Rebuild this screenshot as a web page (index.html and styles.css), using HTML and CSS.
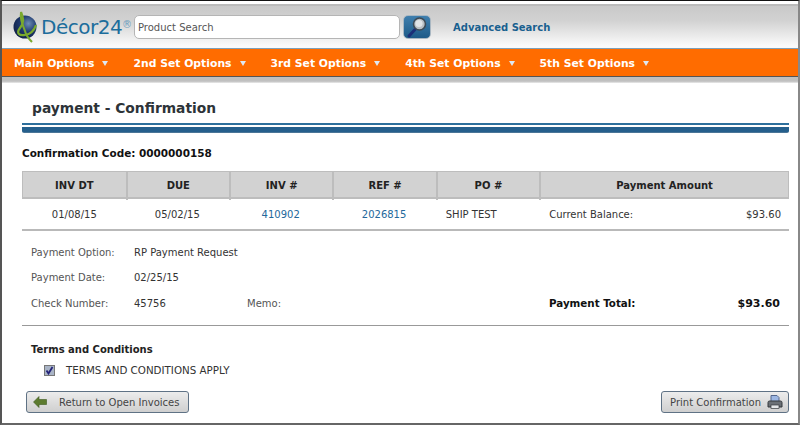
FILE: index.html
```html
<!DOCTYPE html>
<html lang="en">
<head>
<meta charset="utf-8">
<title>payment - Confirmation</title>
<link rel="stylesheet" href="styles.css">
</head>
<body>
<div class="frame">
  <header class="top">
    <svg class="logo" width="24" height="32" viewBox="0 0 24 32">
      <defs>
        <radialGradient id="globe" cx="0.65" cy="0.35" r="0.8">
          <stop offset="0" stop-color="#6d8db5"/>
          <stop offset="0.45" stop-color="#1f3a70"/>
          <stop offset="1" stop-color="#0b1a3d"/>
        </radialGradient>
      </defs>
      <circle cx="12" cy="16" r="11.5" fill="url(#globe)"/>
      <path d="M8 1 C11 8 11 12 7 17 C3 22 6 25 12 24 C18 23 21 20 23 14" fill="none" stroke="#7aa92e" stroke-width="2.2"/>
      <path d="M8 1 C7 8 9 12 12 20 C13 25 16 28 19 31" fill="none" stroke="#7aa92e" stroke-width="2"/>
    </svg>
    <div class="brand">Décor24<sup class="reg">®</sup></div>
    <div class="search">Product Search</div>
    <button class="go" type="button" aria-label="Search">
      <svg width="24" height="24" viewBox="0 0 24 24">
        <path d="M4 21 L10 14.5" stroke="#1c2f78" stroke-width="3" stroke-linecap="round"/>
        <circle cx="14.5" cy="9" r="6" fill="#b9bfc4" stroke="#3d4a55" stroke-width="1.6"/>
        <circle cx="14" cy="8.5" r="3.6" fill="#dfe3e6"/>
      </svg>
    </button>
    <a class="adv" href="#">Advanced Search</a>
  </header>
  <nav class="nav">
    <span class="nav-item">Main Options<i class="caret"></i></span>
    <span class="nav-item">2nd Set Options<i class="caret"></i></span>
    <span class="nav-item">3rd Set Options<i class="caret"></i></span>
    <span class="nav-item">4th Set Options<i class="caret"></i></span>
    <span class="nav-item">5th Set Options<i class="caret"></i></span>
  </nav>
  <div class="band"></div>
  <main class="content">
    <h1 class="title">payment - Confirmation</h1>
    <div class="rule"></div>
    <div class="code">Confirmation Code: 0000000158</div>
    <div class="grid head">
      <div>INV DT</div><div>DUE</div><div>INV #</div><div>REF #</div><div>PO #</div><div>Payment Amount</div>
    </div>
    <div class="grid row">
      <div>01/08/15</div><div>05/02/15</div><div><a href="#">410902</a></div><div><a href="#">2026815</a></div><div class="po">SHIP TEST</div>
      <div class="bal"><span>Current Balance:</span><span>$93.60</span></div>
    </div>
    <section class="details">
      <div class="line"><span class="lbl">Payment Option:</span><span class="val">RP Payment Request</span></div>
      <div class="line"><span class="lbl">Payment Date:</span><span class="val">02/25/15</span></div>
      <div class="line"><span class="lbl">Check Number:</span><span class="val check">45756</span><span class="lbl memo">Memo:</span>
        <span class="total"><b>Payment Total:</b><b class="sum">$93.60</b></span></div>
    </section>
    <section class="terms">
      <div class="terms-h">Terms and Conditions</div>
      <div class="terms-c"><span class="box"><svg width="9" height="9" viewBox="0 0 9 9"><path d="M1.5 4.5 L3.5 7.5 L7.5 1" fill="none" stroke="#24247a" stroke-width="1.8"/></svg></span>TERMS AND CONDITIONS APPLY</div>
    </section>
    <div class="actions">
      <button class="btn" type="button">
        <svg width="14" height="12" viewBox="0 0 14 12"><path d="M0.5 6 L6 0.5 V3.5 H13.5 V8.5 H6 V11.5 Z" fill="#5d7b2f" stroke="#3d5a1e" stroke-width="0.6"/></svg>
        <span class="back-t">Return to Open Invoices</span>
      </button>
      <button class="btn print" type="button">
        <span>Print Confirmation</span>
        <svg width="16" height="14" viewBox="0 0 16 14">
          <path d="M4 7 V0.5 H10 L12 2.5 V7 Z" fill="#9db7e3" stroke="#56688c"/>
          <path d="M1 12 V7.5 Q1 6 2.5 6 H13.5 Q15 6 15 7.5 V12 Z" fill="#6b7076" stroke="#34383d"/>
          <rect x="4" y="10" width="8" height="3.5" fill="#e4e6e8" stroke="#34383d" stroke-width="0.7"/>
        </svg>
      </button>
    </div>
  </main>
</div>
</body>
</html>
```
FILE: styles.css
```css
* { box-sizing: border-box; }
html, body { margin: 0; padding: 0; background: #fff; }
body { width: 800px; height: 425px; overflow: hidden; font-family: "DejaVu Sans", Verdana, sans-serif; font-size: 10px; color: #333; }
.frame { width: 800px; height: 425px; background: #fff; border-top: 1px solid #111; border-left: 2px solid #555; border-right: 2px solid #888; border-bottom: 2px solid #666; overflow: hidden; }
.top { height: 45px; margin-top: 3px; display: flex; align-items: center; background: linear-gradient(#c9c9c9, #d2d2d2 35%, #fbfbfb 95%); border-top: 2px solid #bbb; border-bottom: 1px solid #7fa0b8; padding-left: 11px; }
.logo { flex: none; margin-right: 4px; }
.brand { font-family: "DejaVu Sans", sans-serif; font-size: 20px; color: #1c6d9c; width: 93px; letter-spacing: -0.5px; white-space: nowrap; }
.reg { font-size: 10px; color: #6fa0c0; vertical-align: 6px; line-height: 0; letter-spacing: 0; }
.search { width: 266px; height: 24px; background: #fff; border: 1px solid #b5b5b5; border-radius: 5px; padding-left: 3px; line-height: 24px; font-size: 10px; color: #555; }
.go { width: 28px; height: 24px; margin-left: 3px; padding: 0; border: 1px solid #a9b7c2; border-radius: 5px; background: linear-gradient(#3f7fae, #1d5a88); display: flex; align-items: center; justify-content: center; }
.adv { margin-left: 22px; font-size: 10px; font-weight: bold; color: #19608f; text-decoration: none; }
.nav { height: 28px; background: #ff6c00; border-bottom: 1px solid #555; display: flex; align-items: center; padding: 2px 0 0 12px; color: #fff; font-size: 10.8px; font-weight: bold; }
.nav-item { display: inline-flex; align-items: center; white-space: nowrap; margin-right: 25px; }
.caret { width: 0; height: 0; margin-left: 8px; border-left: 3px solid transparent; border-right: 3px solid transparent; border-top: 5px solid #dfe8f2; }
.band { height: 6px; background: linear-gradient(#c0c0c0 70%, #ececec); }
.content { padding: 0 9px 0 20px; }
.title { margin: 0; padding: 13px 0 0 10px; height: 40px; font-size: 13.8px; line-height: 24px; font-weight: bold; color: #2d3338; }
.rule { height: 10px; border-top: 2px solid #2d6f9c; background: linear-gradient(#fff 2px, #255f8c 2px, #255f8c 7px, #bbb 9px); border-radius: 0 0 2px 2px; }
.code { margin-top: 14px; height: 24px; font-size: 10.45px; font-weight: bold; color: #111; }
.grid { display: grid; grid-template-columns: 102.6px repeat(4, 103.4px) 1fr; }
.head { height: 28px; background: #d2d2d2; border: 1px solid #bdbdbd; border-bottom-width: 2px; font-weight: bold; color: #222; text-align: center; }
.head div { line-height: 28px; border-left: 2px solid #bdbdbd; }
.head div:first-child { border-left: 0; }
.row { height: 32px; padding: 0 0 0 1px; border-bottom: 2px solid #b9b9b9; align-items: center; text-align: center; color: #333; }
.row a { color: #23689b; text-decoration: none; }
.po { text-align: left; padding-left: 10px; }
.bal { display: flex; justify-content: space-between; padding: 0 8px 0 10px; }
.details { padding: 16px 0 0 9px; height: 95px; border-bottom: 1px solid #999; }
.line { display: flex; height: 25px; align-items: baseline; color: #555; }
.lbl { width: 103px; }
.val { color: #333; }
.check { width: 113px; }
.memo { width: 302px; }
.total { display: flex; justify-content: space-between; flex: 1; padding-right: 9px; color: #111; font-size: 10.3px; }
.sum { font-size: 11px; }
.terms { padding: 18px 0 0 9px; }
.terms-h { font-weight: bold; color: #222; height: 14px; }
.terms-c { display: flex; align-items: center; height: 18px; margin-top: 3px; padding-left: 13px; color: #333; font-size: 10.3px; }
.box { width: 11px; height: 11px; margin-right: 11px; background: #a9b4c6; border: 1px solid #777; display: flex; align-items: center; justify-content: center; }
.actions { display: flex; justify-content: space-between; margin-top: 12px; padding: 0 0 0 4px; }
.btn { height: 22px; padding: 0 8px 0 6px; display: flex; align-items: center; font: inherit; color: #444; background: linear-gradient(#ececec, #cfcfcf); border: 1px solid #5f7285; border-radius: 3px; }
.back-t { margin-left: 12px; padding-right: 1px; }
.print { gap: 6px; padding-left: 8px; padding-right: 5px; }
```
